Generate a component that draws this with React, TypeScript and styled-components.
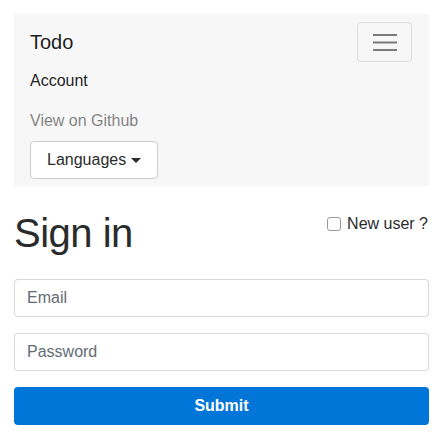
import React from "react";
import styled, { createGlobalStyle } from "styled-components";

const Global = createGlobalStyle`
  html, body { margin: 0; padding: 0; background: #fff; }
  body {
    font-family: "Liberation Sans", Arial, Helvetica, sans-serif;
    font-size: 16px;
    line-height: 1.5;
    color: #292b2c;
  }
  * { box-sizing: border-box; }
`;

const Page = styled.div`
  padding: 14px 11px 0 14px;
`;

const Navbar = styled.nav`
  background: #f7f7f7;
  padding: 7px 16px;
  display: flex;
  flex-direction: column;
`;

const TopRow = styled.div`
  display: flex;
  align-items: center;
  justify-content: space-between;
  height: 40px;
`;

const Brand = styled.a`
  font-size: 20px;
  line-height: 30px;
  margin-top: 1px;
  color: rgba(0, 0, 0, 0.9);
  text-decoration: none;
`;

const Toggler = styled.button`
  width: 55px;
  height: 40px;
  margin-top: 2px;
  margin-right: 1px;
  background: transparent;
  border: 1px solid rgba(0, 0, 0, 0.1);
  border-radius: 4px;
  display: flex;
  align-items: center;
  justify-content: center;
  padding: 0;
`;

const NavList = styled.ul`
  list-style: none;
  margin: 0;
  padding: 0;
  display: flex;
  flex-direction: column;
`;

const NavLink = styled.a<{ $muted?: boolean }>`
  display: block;
  padding: 8px 0;
  line-height: 24px;
  color: ${(p) => (p.$muted ? "rgba(0,0,0,0.5)" : "rgba(0,0,0,0.9)")};
  text-decoration: none;
`;

const DropButton = styled.button`
  align-self: flex-start;
  height: 38px;
  padding: 0 16px;
  background: #fff;
  border: 1px solid #ccc;
  border-radius: 4px;
  font-family: inherit;
  font-size: 16px;
  color: #292b2c;
  display: flex;
  align-items: center;
`;

const Caret = styled.span`
  display: inline-block;
  width: 0;
  height: 0;
  margin-left: 5px;
  border-top: 5px solid #292b2c;
  border-left: 5px solid transparent;
  border-right: 5px solid transparent;
`;

const Header = styled.div`
  display: flex;
  justify-content: space-between;
  align-items: flex-start;
  margin-top: 25px;
  margin-bottom: 24px;
`;

const Title = styled.h1`
  margin: 0;
  font-size: 40px;
  line-height: 44px;
  font-weight: 400;
  letter-spacing: -0.5px;
  color: #292b2c;
`;

const CheckLabel = styled.label`
  display: flex;
  align-items: center;
  margin-top: 1px;
  margin-right: 1px;
  font-size: 16px;
  line-height: 24px;
  color: #292b2c;
`;

const CheckBox = styled.span`
  width: 14px;
  height: 14px;
  border: 1px solid #9a9a9a;
  border-radius: 3px;
  background: #fff;
  margin-right: 6px;
`;

const Form = styled.form`
  display: flex;
  flex-direction: column;
  gap: 16px;
`;

const Input = styled.input`
  width: 100%;
  height: 38px;
  padding: 8px 12px;
  border: 1px solid rgba(0, 0, 0, 0.15);
  border-radius: 4px;
  font-family: inherit;
  font-size: 16px;
  color: #464a4c;
  &::placeholder { color: #636c72; opacity: 1; }
`;

const Submit = styled.button`
  width: 100%;
  height: 38px;
  border: none;
  border-radius: 4px;
  background: #0275d8;
  color: #fff;
  font-family: inherit;
  font-size: 16px;
  font-weight: 700;
`;

export default function App() {
  return (
    <>
      <Global />
      <Page>
        <Navbar>
          <TopRow>
            <Brand href="#">Todo</Brand>
            <Toggler aria-label="Toggle navigation">
              <svg width="30" height="30" viewBox="0 0 30 30">
                <path
                  d="M3 8h24M3 15.5h24M3 23h24"
                  stroke="rgba(0,0,0,0.5)"
                  strokeWidth="2"
                />
              </svg>
            </Toggler>
          </TopRow>
          <NavList>
            <li><NavLink href="#">Account</NavLink></li>
            <li><NavLink href="#" $muted>View on Github</NavLink></li>
          </NavList>
          <DropButton type="button">
            Languages<Caret />
          </DropButton>
        </Navbar>
        <Header>
          <Title>Sign in</Title>
          <CheckLabel>
            <CheckBox />
            New user ?
          </CheckLabel>
        </Header>
        <Form onSubmit={(e) => e.preventDefault()}>
          <Input type="email" placeholder="Email" />
          <Input type="password" placeholder="Password" />
          <Submit type="submit">Submit</Submit>
        </Form>
      </Page>
    </>
  );
}
